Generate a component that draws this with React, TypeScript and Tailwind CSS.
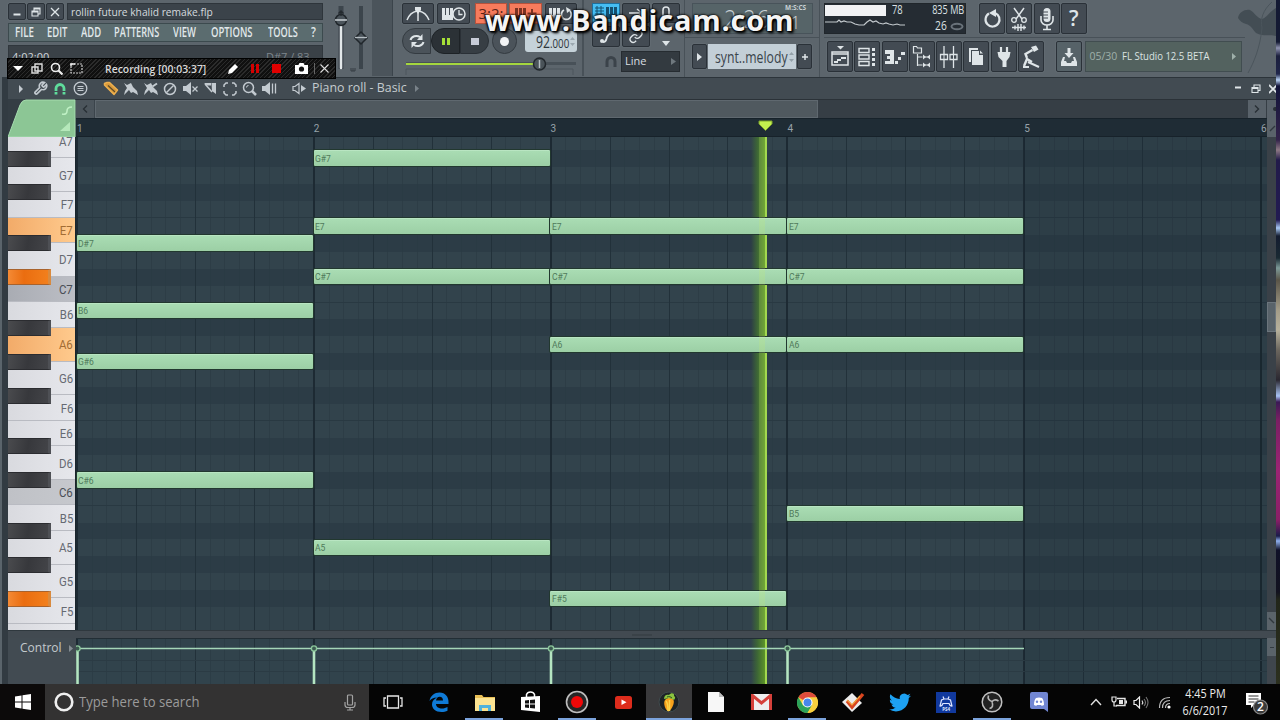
import React from "react";

const UI = "font-['Open_Sans','Noto_Sans',sans-serif]";
const ROW = 16.93;
const BAR = 236.8;

function Svg({ w, h, box, children, className = "" }: { w: number; h: number; box?: string; children: React.ReactNode; className?: string }) {
  return (
    <svg width={w} height={h} viewBox={box ?? `0 0 ${w} ${h}`} className={"block shrink-0 " + className} fill="none">
      {children}
    </svg>
  );
}

function Btn({ children, className = "" }: { children?: React.ReactNode; className?: string }) {
  return (
    <div className={"flex shrink-0 items-center justify-center rounded-[2px] border border-[#2a3138] bg-[#434b53] shadow-[0_0_0_1px_#616a71] " + className}>
      {children}
    </div>
  );
}

const L = "#dfe5e8";

/* ---------- top toolbar ---------- */

function TitleSection() {
  return (
    <div className="ml-2 flex w-[315px] shrink-0 flex-col gap-[3px] pt-[3px]">
      <div className="flex h-[17px] items-stretch gap-[1px]">
        <Btn className="w-[18px]"><Svg w={10} h={10}><path d="M1.500 7.500h7" stroke={L} strokeWidth="2" /></Svg></Btn>
        <Btn className="w-[18px]"><Svg w={10} h={10}><path d="M1 4h6v5H1zM3 4V1h6v6H7M1 5h6M3 2h6" stroke={L} strokeWidth="1.1" /></Svg></Btn>
        <Btn className="w-[18px]"><Svg w={10} h={10}><path d="M1 1l8 8M9 1l-8 8" stroke={L} strokeWidth="1.3" /></Svg></Btn>
        <div className="ml-[2px] flex flex-1 items-center border border-[#2e353b] bg-[#3b434a] pl-[3px]">
          <span className="origin-left scale-x-[0.93] whitespace-nowrap text-[11px] font-medium leading-none text-[#d5dade]">rollin future khalid remake.flp</span>
        </div>
      </div>
      <div className="flex h-[19px] items-center border border-[#3c4a4e] bg-[#5b6c6f] text-[13.5px] font-semibold leading-none text-[#e1e8ea]">
        <span className="ml-[6px] w-[32px]"><span className="inline-block origin-left scale-x-[0.72]">FILE</span></span>
        <span className="w-[34px]"><span className="inline-block origin-left scale-x-[0.7]">EDIT</span></span>
        <span className="w-[33px]"><span className="inline-block origin-left scale-x-[0.7]">ADD</span></span>
        <span className="w-[59px]"><span className="inline-block origin-left scale-x-[0.68]">PATTERNS</span></span>
        <span className="w-[38px]"><span className="inline-block origin-left scale-x-[0.7]">VIEW</span></span>
        <span className="w-[57px]"><span className="inline-block origin-left scale-x-[0.7]">OPTIONS</span></span>
        <span className="w-[43px]"><span className="inline-block origin-left scale-x-[0.68]">TOOLS</span></span>
        <span><span className="inline-block origin-left scale-x-[0.8]">?</span></span>
      </div>
      <div className="flex h-[31px] justify-between border border-[#30373d] bg-[#3a4147] px-[3px] pt-[5px] text-[11px] leading-none text-[#cfd5d9]">
        <span>4:02:00</span>
        <span className="mr-[1px] text-[#7e868c]">D#7 / 83 –</span>
      </div>
    </div>
  );
}

function MasterSliders() {
  return (
    <Svg w={68} h={76} className="ml-[3px]">
      <path d="M46 0h20v76H46z" fill="#4b545b" />
      <path d="M66.500 0v76" stroke="#3b444b" />
      <path d="M12.500 6h5v63h-5z" fill="#3c454c" />
      <path d="M15 22v46" stroke="#e3e8ea" strokeWidth="2.500" strokeLinecap="round" />
      <path d="M33 6h4v63h-4z" fill="#3c454c" />
      <circle cx="15" cy="20" r="5.500" fill="#4b545b" stroke="#20262b" strokeWidth="1.500" />
      <path d="M9 20h12" stroke="#dfe5e8" strokeWidth="1.300" />
      <path d="M15 11v5M12.500 13.500L15 11l2.500 2.500" stroke="#242a2f" strokeWidth="1.300" />
      <path d="M35 32l6 6-6 6-6-6z" fill="#4b545b" stroke="#20262b" strokeWidth="1.500" />
      <path d="M29 37.500h12" stroke="#b5bdc2" strokeWidth="1.300" />
      <path d="M25 68v3h4v-3M27 68v3" stroke="#343c42" />
    </Svg>
  );
}

function TransportSection() {
  return (
    <div className="relative flex w-[190px] shrink-0 flex-col bg-[#5c656c] pl-[8px] pt-[3px]">
      <div className="flex h-[21px] items-stretch gap-[3px]">
        <Btn className="w-[32px]">
          <Svg w={26} h={16}><path d="M2 14c2-5 5-8 10-9M24 14c-2-5-5-8-10-9M13 3v12" stroke={L} strokeWidth="1.500" /><path d="M10 1h6v3l-3 4-3-4z" fill={L} /></Svg>
        </Btn>
        <Btn className="w-[33px]">
          <Svg w={26} h={16}><path d="M1 2h3v7h1V2h3v7h1V2h3v12H1z" fill={L} /><circle cx="18" cy="8" r="6" fill="#434b53" stroke={L} strokeWidth="1.500" /><path d="M18 4v4.500h3.500" stroke={L} strokeWidth="1.300" /></Svg>
        </Btn>
        <div className="ml-[2px] flex w-[32px] items-center justify-center border border-[#b5523c] bg-[#f77b5c] text-[15px] leading-none text-[#5a2318]">3:2:</div>
        <div className="-ml-px flex w-[33px] items-center justify-center border border-[#b5523c] bg-[#f77b5c]">
          <Svg w={26} h={15}><path d="M2 2h3v7h1V2h3v7h1V2h3v12H2z" fill="#7c3322" /><path d="M19 3v9M14.500 7.500h9" stroke="#7c3322" strokeWidth="2" /></Svg>
        </div>
        <Btn className="w-[32px]">
          <Svg w={26} h={16}><path d="M1 2h3v7h1V2h3v7h1V2h3v12H1z" fill={L} /><path d="M16 4a5 5 0 1 0 6 1" stroke={L} strokeWidth="1.800" /><path d="M18 1l5 3-4 3z" fill={L} /></Svg>
        </Btn>
      </div>
      <div className="mt-[4px] flex h-[26px] items-stretch">
        <div className="flex w-[29px] items-center justify-center rounded-l-full border border-[#343b41] bg-[#4b535a]">
          <Svg w={18} h={16}><path d="M2.500 7A6 5 0 0 1 12 4M15.500 9A6 5 0 0 1 6 12" stroke={L} strokeWidth="2" /><path d="M14.500 1v6H9zM3.500 15V9H9z" fill={L} /></Svg>
        </div>
        <div className="flex w-[29px] items-center justify-center gap-[2px] rounded-l-full border border-[#1d2226] bg-[#2b3136]">
          <div className="h-[7px] w-[3px] bg-[#a5df38]" /><div className="h-[7px] w-[3px] bg-[#a5df38]" />
        </div>
        <div className="flex w-[29px] items-center justify-center rounded-r-full border border-[#2a3036] bg-[#373e44]">
          <div className="h-[7px] w-[8px] bg-[#c7ccd8]" />
        </div>
        <div className="ml-[3px] flex w-[25px] items-center justify-center rounded-full border border-[#343b41] bg-[#4b535a]">
          <div className="h-[9px] w-[9px] rounded-full bg-[#f2f4f5]" />
        </div>
        <div className="ml-[8px] mt-[3px] flex h-[21px] w-[52px] items-center rounded-[3px] bg-[#c5d2d9] pl-[11px] text-[#2e363c]">
          <span className="w-[34px]"><span className="flex w-fit origin-left scale-x-[0.72] items-baseline whitespace-nowrap text-[17px] leading-none">92<span className="text-[13.500px]">.000</span></span></span>
          <Svg w={5} h={11}><path d="M0 4l2.500-3L5 4M0 7l2.500 3L5 7" fill="#9ba8b0" /></Svg>
        </div>
      </div>
      <Svg w={176} h={20} className="ml-[2px] mt-[1px]">
        <path d="M2 8.500h170" stroke="#485158" strokeWidth="3" />
        <path d="M2 9h134" stroke="#a4d63e" strokeWidth="2" />
        <path d="M2 20v-6h167v6" stroke="#4d565d" />
        <circle cx="135.500" cy="9" r="6" fill="#4a5359" stroke="#20262b" strokeWidth="1.500" />
        <path d="M135.500 5v8" stroke="#b5bdc2" strokeWidth="1.500" />
      </Svg>
      <div className="absolute right-0 top-0 h-[76px] w-[2px] bg-[#485158]" />
    </div>
  );
}

function SnapSection() {
  return (
    <div className="flex w-[100px] shrink-0 flex-col bg-[#5c656c] pl-[8px] pt-[3px]">
      <div className="flex h-[20px] items-stretch gap-[2px]">
        <div className="flex w-[28px] items-center justify-center border border-[#1f6f9c] bg-[#45bdf2]">
          <Svg w={24} h={16}><path d="M1 3h9M1 6h9M1 9h9M3 1v10M7 1v10" stroke="#15506f" /><path d="M12 2h3v7h1V2h3v7h1V2h3v12H12z" fill="#15506f" /></Svg>
        </div>
        <Btn className="w-[28px]"><Svg w={18} h={12}><path d="M2 6h12M10 2l5 4-5 4" stroke={L} strokeWidth="1.500" /></Svg></Btn>
        <Btn className="w-[28px]"><Svg w={10} h={14}><rect x="2" y="1" width="6" height="12" rx="3" stroke={L} strokeWidth="1.500" /></Svg></Btn>
      </div>
      <div className="mt-[3px] flex h-[21px] items-stretch gap-[2px]">
        <Btn className="w-[28px]"><Svg w={16} h={14}><path d="M5 12c4 0 3-3 4-5s3-4 5-3" stroke={L} strokeWidth="1.800" /><circle cx="4" cy="11" r="2" fill={L} /></Svg></Btn>
        <Btn className="w-[28px]"><Svg w={16} h={15} box="0 0 24 24"><path d="M10 13a5 5 0 0 0 7.500.500l3-3a5 5 0 0 0-7-7l-1.700 1.700M14 11a5 5 0 0 0-7.500-.500l-3 3a5 5 0 0 0 7 7l1.700-1.700" stroke={L} strokeWidth="2.200" /></Svg></Btn>
        <div className="flex w-[28px] items-end justify-center pb-[1px]"><Svg w={8} h={5}><path d="M0 0h8L4 5z" fill={L} /></Svg></div>
      </div>
      <div className="mt-[4px] flex items-center">
        <Svg w={14} h={14} className="ml-[12px]"><path d="M3 12V6.500a4 4 0 0 1 8 0V12" stroke="#3b434a" strokeWidth="3" /></Svg>
        <div className="ml-[3px] flex h-[21px] w-[59px] items-center justify-between border border-[#262c31] bg-[#333a40] px-[3px] text-[11px] font-medium leading-none text-[#d9dfe2]">
          <span className="-mt-[2px]">Line</span>
          <Svg w={5} h={7}><path d="M0 0l5 3.500L0 7z" fill="#6f787e" /></Svg>
        </div>
      </div>
    </div>
  );
}

function PatternSection() {
  return (
    <div className="flex w-[135px] shrink-0 flex-col border-l border-[#485158] bg-[#5c656c] pl-[7px] pt-[3px]">
      <div className="flex h-[31px] w-[121px] border border-[#48535a] bg-[#566468] text-[#c9d1d5]">
        <div className="flex-1 pl-[31px] pt-px text-[26px] font-light leading-[26px] tracking-[1px]"><span className="inline-block origin-left scale-x-[0.84]">2:26</span></div>
        <div className="w-[27px] pt-[1px] text-[6.500px] font-bold leading-none">M:S:CS<div className="mt-px pl-[5px] text-[19px] font-light leading-[19px]">1</div></div>
      </div>
      <div className="-ml-[8px] mt-[3px] h-px bg-[#485158]" />
      <div className="mt-[6px] flex h-[25px] items-stretch gap-[1px]">
        <Btn className="w-[15px]"><Svg w={5} h={8}><path d="M0 0l5 4-5 4z" fill={L} /></Svg></Btn>
        <div className="flex w-[88px] items-center justify-between bg-[#c3cfd7] pl-[7px] pr-[2px] text-[#3a444b]">
          <span className="w-[73px]"><span className="block w-fit origin-left scale-x-[0.72] whitespace-nowrap text-[17px] leading-none">synt..melody</span></span>
          <Svg w={5} h={12}><path d="M0 4l2.500-3L5 4M0 8l2.500 3L5 8" fill="#94a1a9" /></Svg>
        </div>
        <Btn className="w-[15px]"><Svg w={8} h={8}><path d="M4 1v6M1 4h6" stroke={L} strokeWidth="1.500" /></Svg></Btn>
      </div>
    </div>
  );
}

const B26 = "h-[31px] w-[26px]";

function CpuPanel() {
  return (
    <div className="flex h-[31px] w-[142px] shrink-0 border border-[#20262b] bg-[#252c33] text-[12px] font-medium leading-none text-[#dce2e5]">
      <div className="flex w-[81px] flex-col">
        <div className="flex h-[12px] items-center">
          <div className="h-[11px] w-[62px] bg-[#f1f2f4]" />
          <span className="ml-[6px] inline-block origin-left scale-x-[0.78]">78</span>
        </div>
        <Svg w={81} h={16} className="mt-px">
          <path d="M0 5h12l2-2 2 2 3-1 3 1h4l4 2 4 1h5l3-3 3-2 3 2 3-1 3 2 4 1 3-1 3 1 4 1 4-1 3 1h5" stroke="#c3c9cd" strokeWidth="1.200" />
        </Svg>
      </div>
      <div className="flex flex-1 flex-col items-end gap-[4px] pr-[1px]">
        <span className="inline-block origin-right scale-x-[0.76]">835 MB</span>
        <div className="flex items-center gap-[3px]">
          <span className="inline-block origin-right scale-x-[0.85]">26</span>
          <Svg w={14} h={9}><ellipse cx="7" cy="4.500" rx="5.500" ry="2.800" stroke="#69727a" strokeWidth="2" /></Svg>
        </div>
      </div>
    </div>
  );
}

function RightSection() {
  return (
    <div className="relative flex min-w-0 flex-1 flex-col border-l border-[#485158] pl-[4px] pt-[3px]">
      <svg className="absolute right-0 top-0" width="40" height="76" viewBox="0 0 40 76" fill="none">
        <path d="M2 18c1-6 7-9 12-8 4 2 7 8 12 9 5-1 8-8 14-11v28c-5-2-12 1-20-3-3-3-5-8-10-9-4-1-6-3-8-6z" fill="#434d54" />
        <path d="M36 2c-9 8-12 17-10 26-2 20-8 34-14 45" stroke="#4b555c" />
      </svg>
      <div className="flex items-center">
        <CpuPanel />
        <div className="ml-[13px] flex gap-[1.300px]">
          <Btn className={B26}><Svg w={19} h={20}><path d="M6 4.500A7 7 0 1 0 12 4" stroke={L} strokeWidth="2.200" /><path d="M13 0v8L6 4z" fill={L} /></Svg></Btn>
          <Btn className={B26}><Svg w={18} h={26}><path d="M4 2l8 11M14 2L6 13" stroke={L} strokeWidth="1.500" /><circle cx="4" cy="14" r="2.300" stroke={L} strokeWidth="1.300" /><circle cx="14" cy="14" r="2.300" stroke={L} strokeWidth="1.300" /><path d="M2 21.500h14M5 19.500v4M8 18v7M11 18v7M14 19.500v4" stroke={L} strokeWidth="1.400" /></Svg></Btn>
          <Btn className={B26}><Svg w={16} h={24}><rect x="4.500" y="1" width="7" height="14" rx="3.500" fill={L} /><path d="M4 5h5M4 8h5M4 11h5" stroke="#434b53" /><path d="M2 9v4a6 5 0 0 0 12 0V9M8 18v4M4 22.500h8" stroke={L} strokeWidth="1.600" /></Svg></Btn>
          <Btn className={B26 + " text-[21px] font-semibold leading-none text-[#dfe5e8]"}>?</Btn>
        </div>
      </div>
      <div className="mt-[3px] h-px w-[421px] bg-[#485158]" />
      <div className="mt-[3px] flex gap-[1.300px] pl-[3px]">
        <Btn className={B26}><Svg w={20} h={22}><path d="M7 0h7l-3.500 3.500z" fill={L} /><path d="M2 6h16v13H2zM2 8h16" stroke={L} strokeWidth="1.500" /><path d="M4 16h4M7 14h4M11 12h5" stroke={L} strokeWidth="2" /></Svg></Btn>
        <Btn className={B26}><Svg w={18} h={20}><path d="M1 1.500h10v4H1zM1 8h10v4H1zM1 14.500h10v4H1z" stroke={L} strokeWidth="1.400" /><path d="M14 1h3v3h-3zM14 6h3v3h-3zM14 11h3v3h-3zM14 16h3v3h-3z" fill={L} /></Svg></Btn>
        <Btn className={B26}><Svg w={22} h={18}><path d="M1 2h9v14H1v-3h5v-2H3V8h3V6H1z" fill={L} /><path d="M11 13h3v3h-3zM14 9h3v3h-3zM17 4h4v3h-4z" fill={L} /></Svg></Btn>
        <Btn className={B26}><Svg w={20} h={24}><path d="M1.500 1.500h3l1 1.500h4v5h-8zM5.500 9v12M5.500 12h5M5.500 20h5M12 12h6M12 20h6" stroke={L} strokeWidth="1.200" /><path d="M11 9.500v5l3-2.500zM18 9.500v5L15 12zM11 17.500v5l3-2.500zM18 17.500v5L15 20z" fill={L} /></Svg></Btn>
        <Btn className={B26}><Svg w={20} h={24}><path d="M5 1v22M14.500 1v22" stroke={L} strokeWidth="1.300" /><path d="M1.500 9.500h7v5h-7zM11 9.500h7v5h-7z" fill="#434b53" stroke={L} strokeWidth="1.300" /><path d="M5 9v6M14.500 9v6" stroke={L} strokeWidth="1" /></Svg></Btn>
        <Btn className={B26}><Svg w={16} h={20}><path d="M2 15V2h8" stroke={L} strokeWidth="2" /><path d="M4 4h7v4h4v10H4z" fill={L} /><path d="M12 3.500l3 3h-3z" fill={L} /></Svg></Btn>
        <Btn className={B26}><Svg w={16} h={22}><path d="M5 1v6M11 1v6" stroke={L} strokeWidth="2.200" /><path d="M1.500 6h13l-1 5-3 4v6H6.500v-6l-4-4z" fill={L} /></Svg></Btn>
        <Btn className={B26}><Svg w={20} h={24}><path d="M2 22h6M7 17l11 5" stroke={L} strokeWidth="2" /><path d="M3 21l3-7 5 3M6 13L4.500 9l7-4" stroke={L} strokeWidth="2.400" /><path d="M10 2l5-1.500 2.500 4L13 7z" fill={L} /></Svg></Btn>
        <div className="ml-[11px] flex gap-[3px]">
          <Btn className={B26 + " bg-[#566268]"}><Svg w={18} h={20}><path d="M7.500 1h3v5h3L9 11 4.500 6h3z" fill={L} /><path d="M3 10l-2 5v4h16v-4l-2-5-2 0 1 4h-2l-1 2H7l-1-2H4l1-4z" fill={L} /></Svg></Btn>
          <div className="flex h-[31px] w-[157px] items-center border border-[#414d50] bg-[#53625f] pl-[3px] pr-[5px] text-[10.500px] font-medium leading-none">
            <span className="text-[#9fb0aa]">05/30</span>
            <span className="ml-[5px] flex-1 whitespace-nowrap text-[#dce4e2]"><span className="inline-block origin-left scale-x-[0.91]">FL Studio 12.5 BETA</span></span>
            <Svg w={4} h={7}><path d="M0 0l4 3.500L0 7z" fill="#9fb0aa" /></Svg>
          </div>
        </div>
      </div>
    </div>
  );
}

/* ---------- screen recorder overlay ---------- */

function RecorderBar() {
  return (
    <div className="absolute left-[7px] top-[58px] flex h-[21px] w-[329px] items-center border border-black bg-[repeating-linear-gradient(135deg,#101010_0px,#101010_2px,#2b2b2b_2px,#2b2b2b_3px)]">
      <Svg w={10} h={5} className="ml-[5px]"><path d="M0 0h10L5 5z" fill="#fff" /></Svg>
      <Svg w={12} h={12} className="ml-[8px]"><path d="M4 1h7v7H4zM1 4h6v6H1z" stroke="#ddd" strokeWidth="1.400" /></Svg>
      <Svg w={13} h={13} className="ml-[7px]"><circle cx="5.500" cy="5.500" r="4" stroke="#eee" strokeWidth="1.600" /><path d="M8.500 8.500l4 4" stroke="#eee" strokeWidth="2.200" /></Svg>
      <Svg w={13} h={11} className="ml-[7px]"><path d="M1 1h11v9H1z" stroke="#ccc" strokeWidth="1.200" strokeDasharray="2 1" /><path d="M1 3V1h4" stroke="#eee" strokeWidth="1.500" /></Svg>
      <span className="ml-[22px] w-[122px] whitespace-nowrap text-[11px] font-semibold leading-none text-[#d9d9d9]">
        <span className="inline-block origin-left scale-x-[0.945]">Recording [00:03:37]</span>
      </span>
      <Svg w={12} h={12}><path d="M1 11l1-4 6-6 3 3-6 6z" fill="#fff" /></Svg>
      <div className="ml-[12px] flex gap-[2px]"><div className="h-[9px] w-[3px] bg-[#d40000]" /><div className="h-[9px] w-[3px] bg-[#d40000]" /></div>
      <div className="ml-[13px] h-[9px] w-[9px] bg-[#e00000]" />
      <Svg w={13} h={11} className="ml-[14px]"><path d="M0 2h3.500l1-2h4l1 2H13v9H0z" fill="#fff" /><circle cx="6.500" cy="6" r="2.600" fill="#111" /></Svg>
      <div className="ml-[6px] h-[11px] w-px bg-[#666]" />
      <Svg w={9} h={9} className="ml-[5px]"><path d="M.500.500l8 8M8.500.500l-8 8" stroke="#ddd" strokeWidth="1.100" /></Svg>
    </div>
  );
}

/* ---------- piano roll ---------- */

function Cell({ children }: { children: React.ReactNode }) {
  return <div className="flex h-full w-[19.800px] shrink-0 items-center justify-center">{children}</div>;
}

function RollToolbar() {
  const c = "#c3cad0";
  return (
    <div className="flex h-[22px] shrink-0 items-center border-t border-[#2c343a] bg-[#424b52] pl-[3px]">
      <Cell><Svg w={4} h={8}><path d="M0 0l4 4-4 4z" fill={c} /></Svg></Cell>
      <Cell><Svg w={15} h={15} box="0 0 24 24"><path d="M14.700 6.300a1 1 0 0 0 0 1.400l1.600 1.600a1 1 0 0 0 1.400 0l3.800-3.800a6 6 0 0 1-7.900 7.900l-6.900 6.900a2.100 2.100 0 0 1-3-3l6.900-6.900a6 6 0 0 1 7.900-7.900z" stroke={c} strokeWidth="2.600" /></Svg></Cell>
      <Cell><Svg w={14} h={14}><path d="M3 12.500V6.500a4 4 0 0 1 8 0v6" stroke="#5fdc9c" strokeWidth="2.800" /><path d="M1 9.500h4M9 9.500h4" stroke="#424b52" /></Svg></Cell>
      <Cell><Svg w={15} h={15}><circle cx="7.500" cy="7.500" r="6.300" stroke={c} strokeWidth="1.300" /><path d="M4.500 5.500h6M4.500 7.500h6M4.500 9.500h6" stroke={c} strokeWidth="1.100" /></Svg></Cell>
      <div className="w-[11px]" />
      <Cell><Svg w={16} h={15}><path d="M1.500 4V2.500L4 1.500h2.500l8 7.500-3.500 4.500z" fill="#d99a3c" stroke="#eeb04e" strokeWidth="1.500" strokeLinejoin="round" /><path d="M5 4.500l7 6.500" stroke="#5d4a28" strokeWidth="1.200" /></Svg></Cell>
      <Cell><Svg w={15} h={14}><path d="M1 1l3 2 4-2 2 4 4 4 1 4-5-3-2 1-2-3-5 5 1-4 2-3z" fill={c} /></Svg></Cell>
      <Cell><Svg w={15} h={14}><path d="M1 1l3 2 4-2 2 4 4 4 1 4-5-3-2 1-2-3-5 5 1-4 2-3z" fill={c} /><path d="M9.500 4.500l4.500-3" stroke={c} strokeWidth="2" /></Svg></Cell>
      <Cell><Svg w={14} h={14}><circle cx="7" cy="7" r="5.500" stroke={c} strokeWidth="1.500" /><path d="M3.500 10.500l7-7" stroke={c} strokeWidth="1.500" /></Svg></Cell>
      <Cell><Svg w={15} h={13}><path d="M0 4h3l5-4v13L3 9H0z" fill={c} /><path d="M9.500 4.500l5 5M14.500 4.500l-5 5" stroke={c} strokeWidth="1.300" /></Svg></Cell>
      <Cell><Svg w={14} h={13}><path d="M1 1h7v2.500H4zM8.500 1H13v11l-4-3z" fill={c} /><path d="M2 2l7 8" stroke={c} strokeWidth="1.500" /></Svg></Cell>
      <Cell><Svg w={14} h={14}><path d="M1 5V3l2-2h2M9 1h2l2 2v2M13 9v2l-2 2H9M5 13H3l-2-2V9" stroke={c} strokeWidth="1.500" /></Svg></Cell>
      <Cell><Svg w={15} h={15}><circle cx="6.500" cy="6.500" r="5" stroke={c} strokeWidth="1.500" /><path d="M10 10l4 4" stroke={c} strokeWidth="2.500" /><path d="M4.500 6.500a2 2 0 0 1 2-2" stroke={c} /></Svg></Cell>
      <Cell><Svg w={15} h={13}><path d="M0 4h3l5-4v13L3 9H0z" fill={c} /><path d="M10.500 1.500v10M13.500 1.500v10" stroke={c} strokeWidth="1.300" /></Svg></Cell>
      <div className="w-[10px]" />
      <Cell><Svg w={14} h={13}><path d="M1 4.500h2l4-3v10l-4-3H1z" stroke={c} strokeWidth="1.200" /><path d="M9 3l5 3.500L9 10z" fill={c} /></Svg></Cell>
      <span className="-mt-[2px] ml-[3px] w-[103px] whitespace-nowrap text-[12px] font-medium leading-none text-[#c5cbcf]"><span className="inline-block origin-left scale-x-[1.03]">Piano roll - Basic</span></span>
      <Svg w={4} h={7}><path d="M0 0l4 3.500L0 7z" fill="#798289" /></Svg>
      <div className="flex-1" />
      <Svg w={8} h={10}><path d="M1 3.500h6" stroke={L} strokeWidth="2" /></Svg>
      <Svg w={10} h={10} className="ml-[9px]"><path d="M1 3.500h6v5H1zM3 3V1h6v5.500H7M1 4.500h6" stroke={L} strokeWidth="1.100" /></Svg>
      <Svg w={7} h={10} className="ml-[8px]"><path d="M0 1l8 8M8 1L0 9" stroke={L} strokeWidth="1.800" /></Svg>
    </div>
  );
}

type WhiteKey = { n: string; h: number; tone: string };
const PLAIN = "bg-[linear-gradient(90deg,#d9dadf,#e6e7ec)] text-[#666a72]";
const GRAY = "bg-[linear-gradient(90deg,#a9acb3,#bcbec5)] text-[#4a4e56]";
const HOT = "bg-[linear-gradient(90deg,#f2ab69,#ffca8d)] text-[#a26c34]";
const whites: WhiteKey[] = [
  { n: "A7", h: 33.9, tone: PLAIN }, { n: "G7", h: 33.8, tone: PLAIN }, { n: "F7", h: 25.4, tone: PLAIN },
  { n: "E7", h: 25.4, tone: HOT }, { n: "D7", h: 33.9, tone: PLAIN }, { n: "C7", h: 25.4, tone: GRAY },
  { n: "B6", h: 25.4, tone: PLAIN }, { n: "A6", h: 33.9, tone: HOT }, { n: "G6", h: 33.8, tone: PLAIN },
  { n: "F6", h: 25.4, tone: PLAIN }, { n: "E6", h: 25.4, tone: PLAIN }, { n: "D6", h: 33.9, tone: PLAIN },
  { n: "C6", h: 25.4, tone: "bg-[linear-gradient(90deg,#bfc1c6,#c6c8cd)] text-[#4a4e56]" }, { n: "B5", h: 25.4, tone: PLAIN }, { n: "A5", h: 33.9, tone: PLAIN },
  { n: "G5", h: 33.8, tone: PLAIN }, { n: "F5", h: 25.4, tone: PLAIN }, { n: "", h: 25.4, tone: PLAIN },
];
const blacks = [0, 2, 5, 7, 10, 12, 14, 17, 19, 22, 24, 26];
const litBlacks = [7, 26];
const rowTop = (i: number) => 13.2 + ROW * i;

function Keys() {
  return (
    <div className="relative h-full w-[68px] shrink-0 overflow-hidden border-r border-[#1a252c] bg-[#dcdde2]">
      <div className="-mt-[12.500px] flex flex-col">
        {whites.map((k, i) => (
          <div key={i} style={{ height: k.h }} className={"flex shrink-0 items-center justify-end border-b border-[#b9bbc2] pr-[2px] pt-[1px] text-[12px] leading-none " + k.tone}>
            <span className="inline-block origin-right scale-x-[0.88] font-['Roboto',sans-serif] text-[13px]">{k.n}</span>
          </div>
        ))}
      </div>
      {blacks.map((b) => (
        <div
          key={b}
          style={{ top: rowTop(b) + 0.3 }}
          className={
            "absolute left-0 h-[16px] w-[43px] border-y border-r-[3px] " +
            (litBlacks.includes(b)
              ? "border-[#a8622c] border-r-[#d98a3e] bg-[linear-gradient(90deg,#f48a35,#ea6d10_40%,#f27f1c)]"
              : "border-[#2b2c30] border-r-[#4e5055] bg-[linear-gradient(100deg,#4a4b4e,#37383c_50%,#434448)]")
          }
        />
      ))}
    </div>
  );
}

const notes: { bar: number; row: number; n: string }[] = [
  { bar: 0, row: 5, n: "D#7" }, { bar: 0, row: 9, n: "B6" }, { bar: 0, row: 12, n: "G#6" }, { bar: 0, row: 19, n: "C#6" },
  { bar: 1, row: 0, n: "G#7" }, { bar: 1, row: 4, n: "E7" }, { bar: 1, row: 7, n: "C#7" }, { bar: 1, row: 23, n: "A5" },
  { bar: 2, row: 4, n: "E7" }, { bar: 2, row: 7, n: "C#7" }, { bar: 2, row: 11, n: "A6" }, { bar: 2, row: 26, n: "F#5" },
  { bar: 3, row: 4, n: "E7" }, { bar: 3, row: 7, n: "C#7" }, { bar: 3, row: 11, n: "A6" }, { bar: 3, row: 21, n: "B5" },
];

function BarLines() {
  return (
    <div className="absolute inset-y-0 left-0 flex">
      {[0, 1, 2, 3, 4].map((b) => (
        <div key={b} className="flex h-full w-[236.800px] shrink-0 border-l-2 border-[#1d2a33]">
          {[0, 1, 2, 3].map((q) => (
            <div key={q} className={"flex h-full flex-1 " + (q ? "border-l border-[#22313a]" : "")}>
              {[0, 1, 2, 3].map((s) => (
                <div key={s} className={"h-full flex-1 " + (s ? "border-l border-[#2a3a43]/60" : "")} />
              ))}
            </div>
          ))}
        </div>
      ))}
      <div className="h-full w-[2px] bg-[#1b2830]" />
    </div>
  );
}

function Playhead() {
  return <div className="absolute inset-y-0 left-[675px] w-[16px] border-r-2 border-[#a3d850] bg-[linear-gradient(90deg,transparent,#3d6636_45%,#5c9428)]" />;
}

function Grid() {
  return (
    <div className="relative h-full min-w-0 flex-1 overflow-hidden bg-[#32434d]">
      <div className="-mt-[3.700px] flex flex-col">
        {Array.from({ length: 30 }, (_, k) => k - 1).map((i) => (
          <div
            key={i}
            className={"h-[16.930px] shrink-0 " + (blacks.includes(i) ? "bg-[#2c3c46]" : "bg-[#32434c]") + ([8, 20, 3, 15].includes(i) ? " border-b border-[#293942]" : "")}
          />
        ))}
      </div>
      <BarLines />
      <Playhead />
      {notes.map((n, k) => (
        <div
          key={k}
          style={{ left: 0.7 + n.bar * BAR, top: rowTop(n.row) + 0.2, width: BAR - 0.7 }}
          className="absolute flex h-[15.500px] items-center rounded-[1px] border-t border-t-[#b9e5c2] bg-[linear-gradient(#a9dcb3,#9ccfa5)] pl-[1.500px] shadow-[0_0_0_1px_#22382f]"
        >
          <span className="inline-block origin-left scale-x-90 font-['Roboto',sans-serif] text-[9.500px] leading-none text-[#4f7a5a]">{n.n}</span>
        </div>
      ))}
      <div className="absolute inset-y-0 left-[683px] w-[6px] bg-[#c8f070]/20" />
      <div className="absolute inset-y-0 right-0 w-[243px] bg-[#16242c]/15" />
    </div>
  );
}

function ScrollColumn() {
  return (
    <div className="flex h-full w-[9px] shrink-0 flex-col bg-[#3a4148]">
      <div className="h-[165px]" />
      <div className="h-[30px] border border-[#6b757c] bg-[#59636a]" />
      <div className="flex-1" />
      <div className="flex h-[18px] items-center justify-center bg-[#5a636a]"><Svg w={9} h={8}><path d="M2 1l5 5" stroke="#30383e" strokeWidth="1.300" /></Svg></div>
    </div>
  );
}

function ControlLane() {
  return (
    <div className="flex h-[46px] shrink-0 overflow-hidden">
      <div className="flex w-[68px] shrink-0 items-start bg-[#424b52] pl-[12px] pt-[4px] text-[12.500px] font-medium leading-none text-[#c3c9cd]">
        <span className="inline-block w-[49px]"><span className="inline-block origin-left scale-x-[0.96]">Control</span></span>
        <Svg w={4} h={7} className="mt-[3px]"><path d="M0 0l4 3.500L0 7z" fill="#858d93" /></Svg>
      </div>
      <div className="relative min-w-0 flex-1 overflow-hidden border-t border-[#222e35] bg-[#31434c]">
        <BarLines />
        <div className="absolute left-0 top-[21px] h-[12px] w-full border-y border-[#2b3b44]" />
        <Playhead />
        <svg className="absolute left-0 top-0" width="1191" height="46" viewBox="0 0 1191 46" fill="none">
          <path d="M1 9.500h947" stroke="#a5d6b8" strokeWidth="1.300" />
          {[1, 237.5, 474.5, 711].map((x) => (
            <g key={x}>
              <path d={`M${x + 0.5} 12V46`} stroke="#b4e5c1" strokeWidth="2.600" />
              <circle cx={x + 0.5} cy="9.500" r="2.600" fill="#3b5a50" stroke="#8cc79b" strokeWidth="1.300" />
            </g>
          ))}
        </svg>
        <div className="absolute inset-y-0 right-0 w-[243px] bg-[#16242c]/15" />
      </div>
      <div className="flex w-[9px] flex-col bg-[#3f464d]"><div className="flex h-[18px] items-center justify-center bg-[#5a636a]"><div className="h-px w-[4px] bg-[#333b41]" /></div></div>
    </div>
  );
}

function PianoRoll() {
  return (
    <div className="flex h-[607px] shrink-0 border-l-2 border-[#5a646b] bg-[#323b42] pl-[6px]">
      <div className="flex min-w-0 flex-1 flex-col overflow-hidden">
        <RollToolbar />
        <div className="flex h-[38px] shrink-0 bg-[#343d44]">
          <Svg w={68} h={38}>
            <path d="M0 38L12 6q2-5 6-5h49v37z" fill="#8cc695" stroke="#a5dcae" />
            <path d="M54 15q5 1 5-3t5-4" stroke="#bff0c4" strokeWidth="1.600" />
            <path d="M62 23v9h-10z" fill="#b5e8ba" />
          </Svg>
          <div className="flex min-w-0 flex-1 flex-col">
            <div className="flex h-[19px] border-t border-[#2b3238] bg-[#363e45]">
              <div className="flex w-[19px] items-center justify-center border-r border-[#3b444b] bg-[#4c555c]"><Svg w={6} h={8}><path d="M5 .500L1.500 4 5 7.500" stroke="#282f35" strokeWidth="1.300" /></Svg></div>
              <div className="w-[723px] border border-[#5f686f] bg-[#50595f]" />
              <div className="flex-1" />
              <div className="flex w-[18px] items-center justify-center bg-[#59626a]"><Svg w={6} h={8}><path d="M1 .500L4.500 4 1 7.500" stroke="#282f35" strokeWidth="1.400" /></Svg></div>
              <div className="ml-[1px] flex w-[9px] items-center justify-end bg-[#59626a]"><div className="h-[4px] w-[3px] rounded-l-full bg-[#282f35]" /></div>
            </div>
            <div className="flex h-[19px]">
              <div className="relative flex min-w-0 flex-1 items-center overflow-hidden border-y border-[#17222a] bg-[#1f2c35] font-['Roboto',sans-serif] text-[10px] leading-none text-[#98a3aa]">
                {[1, 2, 3, 4, 5, 6].map((n) => (
                  <div key={n} className="w-[236.800px] shrink-0 pl-[1px] pt-[2px]">{n}</div>
                ))}
                <svg className="absolute left-[682px] top-[1px]" width="15" height="11" viewBox="0 0 15 11"><path d="M1 1h13v3L7.500 10.500 1 4z" fill="#c3ef4e" stroke="#7da32c" /></svg>
              </div>
              <div className="flex w-[9px] items-center justify-end bg-[#5a636a]"><Svg w={7} h={8}><path d="M1 7l5-5" stroke="#30383e" strokeWidth="1.300" /></Svg></div>
            </div>
          </div>
        </div>
        <div className="flex h-[493px] shrink-0">
          <Keys />
          <Grid />
          <ScrollColumn />
        </div>
        <div className="flex h-[8px] shrink-0 items-center justify-center border-t border-[#2f383e] bg-[#424a51]"><div className="h-[2px] w-[20px] bg-[#3a4248]" /></div>
        <ControlLane />
      </div>
    </div>
  );
}

/* ---------- taskbar ---------- */

function Task({ children, run, active }: { children: React.ReactNode; run?: boolean; active?: boolean }) {
  return (
    <div className={"flex h-full w-[46.150px] shrink-0 flex-col items-center " + (active ? "bg-[#3a3a3c]" : "")}>
      <div className="flex flex-1 items-center justify-center pl-[1px] pt-[2px]">{children}</div>
      <div className={"h-[2px] " + (active ? "w-full bg-[#7ba3dc]" : run ? "w-[38px] bg-[#7ba3dc]" : "w-0")} />
    </div>
  );
}

function Taskbar() {
  return (
    <div className="flex h-[36px] items-center bg-[#050505] text-white">
      <div className="flex h-full w-[45px] items-center justify-center bg-[#0c0a0a]">
        <Svg w={16} h={16}><path d="M0 2.500L6.500 1.500V7.500H0zM7.500 1.300L16 0v7.500H7.500zM0 8.500h6.500v6L0 13.500zM7.500 8.500H16V16l-8.500-1.300z" fill="#fff" /></Svg>
      </div>
      <div className="flex h-full w-[324px] items-center bg-[#333232]">
        <Svg w={20} h={20} className="ml-[9px]"><circle cx="10" cy="10" r="8.300" stroke="#f0f0f0" strokeWidth="2.600" /></Svg>
        <span className="ml-[5px] flex-1 text-[14px] leading-none text-[#9b9b9b]"><span className="inline-block origin-left scale-x-[0.935]">Type here to search</span></span>
        <Svg w={12} h={17} className="mr-[13px]"><rect x="3.500" y="1" width="5" height="10" rx="1" stroke="#a3a3a3" strokeWidth="1.200" /><path d="M1 8v3q0 2.500 3 2.500h4q3 0 3-2.500V8M6 13.500v2.500M3 16h6" stroke="#a3a3a3" strokeWidth="1.200" /></Svg>
      </div>
      <Task><Svg w={20} h={14}><path d="M4.500 1h11v12h-11zM3 3H1v8h2M17 3h2v8h-2" stroke="#e6e6e6" strokeWidth="1.300" /></Svg></Task>
      <Task><Svg w={20} h={20}><path d="M0.500 9C1.500 3.500 5.500.500 10.500.500c6 0 9 4.500 9 9.500v2H7c0 3 3 4.500 6 4.500 2 0 4-.600 5.500-1.500v3.800C17 19.600 14.500 20 12.500 20 6.500 20 3 16.500 3 12.500 3 9 5 6.800 8 5.500 4.500 5.500 2 7 .500 9zM7 8.500h7c0-2.300-1.200-3.700-3.300-3.700C8.700 4.800 7.300 6.300 7 8.500z" fill="#0f7ad6" /></Svg></Task>
      <Task run><Svg w={22} h={19}><path d="M1 2h7l1.500 2H21v14H1z" fill="#e9bf55" /><path d="M1 5h20v13H1z" fill="#fbe392" /><path d="M5 18v-6h12v6h-3v-3H8v3z" fill="#4fb2dc" /></Svg></Task>
      <Task><Svg w={21} h={22}><path d="M6.500 6V3.500q1-2.500 4-2.500t4 2.500V6" stroke="#fff" strokeWidth="1.500" /><path d="M1 6l19-1v16L1 19z" fill="#fff" /><path d="M5 9.500l4-.500v3.500H5zM10 9l5-.500v4h-5zM5 13.500h4V17l-4-.500zM10 13.500h5v4l-5-.500z" fill="#111" /></Svg></Task>
      <Task run><Svg w={24} h={24}><circle cx="12" cy="12" r="10.500" fill="#262626" stroke="#bdbdbd" strokeWidth="1.600" /><circle cx="12" cy="12" r="6" fill="#f00808" /></Svg></Task>
      <Task><Svg w={17} h={13}><rect width="17" height="13" rx="2.500" fill="#dd2c1c" /><path d="M6.500 3.500v5.500l5-2.700z" fill="#fff" /></Svg></Task>
      <Task active><Svg w={22} h={22}><circle cx="11" cy="11" r="10" fill="#1d2325" stroke="#3f4a4d" /><path d="M7 9c3-3 7-2 8.500 0 1.500 3-2 10-5 11.500C7 19 5 12 7 9z" fill="#f7a21c" /><path d="M8 10c2 2 2 6 2 10M11.500 9v11" stroke="#fbd34a" strokeWidth="1.500" /><path d="M6 8c0-4 3-5 5-4 2-3 6-2 5 1 2 1 1 3 0 4-3-2-6-2-10-1z" fill="#8ac43f" /><path d="M9 6c2-1 4 0 5 1" stroke="#314d1e" /></Svg></Task>
      <Task><Svg w={16} h={20}><path d="M0 0h11l5 5v15H0z" fill="#f7f7f7" /><path d="M11 0v5h5z" fill="#bdbdbd" /></Svg></Task>
      <Task><Svg w={21} h={16}><path d="M0 0h21v16H0z" fill="#eee" /><path d="M1.500 16V1.500L10.500 9l9-7.500V16" stroke="#d5403a" strokeWidth="3" /></Svg></Task>
      <Task run>
        <Svg w={21} h={21} box="0 0 24 24"><circle cx="12" cy="12" r="12" fill="#f8cf3e" /><path d="M12 12L1.600 6A12 12 0 0 1 22.400 6z" fill="#de4b3c" /><path d="M1.600 6A12 12 0 0 0 12 24l5.200-9H6.800z" fill="#2ca35a" /><path d="M12 24a12 12 0 0 0 10.400-18H12l5.200 9z" fill="#f8cf3e" /><circle cx="12" cy="12" r="5.800" fill="#fff" /><circle cx="12" cy="12" r="4.500" fill="#4787ec" /></Svg>
      </Task>
      <Task><Svg w={23} h={21}><path d="M10 1l10 10-10 9L0 10z" fill="#ececec" /><path d="M5 9l5 6L21 2" stroke="#d9451f" strokeWidth="3.400" /><path d="M5 8l5 5 8-9" stroke="#f2a33c" strokeWidth="1.200" /></Svg></Task>
      <Task><Svg w={22} h={20} box="0 1 24 21"><path d="M23.950 4.570a10 10 0 0 1-2.820.770 4.960 4.960 0 0 0 2.160-2.720c-.950.550-2 .950-3.130 1.180a4.920 4.920 0 0 0-8.380 4.480C7.690 8.090 4.070 6.130 1.640 3.160a4.820 4.820 0 0 0-.670 2.480c0 1.710.870 3.210 2.190 4.100a4.900 4.900 0 0 1-2.230-.610v.060a4.920 4.920 0 0 0 3.950 4.820 5 5 0 0 1-2.210.090 4.940 4.940 0 0 0 4.600 3.420A9.870 9.870 0 0 1 0 19.540a14 14 0 0 0 7.550 2.210c9.050 0 14-7.500 14-13.980 0-.210 0-.420-.020-.630a9.940 9.940 0 0 0 2.420-2.570z" fill="#1da1f2" /></Svg></Task>
      <Task>
        <div className="flex h-[21px] w-[20px] flex-col items-center bg-[#11399e] pt-[3px]">
          <Svg w={14} h={12}><path d="M5 4h4l2.500 1L13 11q-2 .500-3-2.500H4Q3 11.500 1 11l1.500-6zM5 4l-1-2.500M9 4l1-2.500" stroke="#dfe6ff" strokeWidth="1.200" /></Svg>
          <span className="text-[4.500px] font-bold leading-none text-[#dfe6ff]">PS4</span>
        </div>
      </Task>
      <Task run><Svg w={22} h={22}><circle cx="11" cy="11" r="9.800" fill="#222" stroke="#bfbfbf" strokeWidth="1.500" /><path d="M7.500 4.500c-1 3 .5 5 3.500 6M17.500 10c-3-2-5.500-1-6.500 1M8.500 17.500c3-.5 4-3 2.500-6.500" stroke="#b5b5b5" strokeWidth="1.600" /></Svg></Task>
      <Task><Svg w={18} h={20}><path d="M2 0h14q2 0 2 2v18l-4-3H2q-2 0-2-2V2q0-2 2-2z" fill="#7186d2" /><path d="M4 13c0-4 1-6 2-7 2-.800 4-.800 6 0 1 1 2 3 2 7-1.500 1-3 1-3 0H7c0 1-1.500 1-3 0z" fill="#fff" /><circle cx="7" cy="9.800" r="1.200" fill="#7186d2" /><circle cx="11" cy="9.800" r="1.200" fill="#7186d2" /></Svg></Task>
      <div className="flex h-full flex-1 items-center">
        <Svg w={12} h={8} className="ml-[29px]"><path d="M1 7l5-5.500L11 7" stroke="#e0e0e0" strokeWidth="1.400" /></Svg>
        <Svg w={16} h={12} className="ml-[9px]"><path d="M6 2.500h8v7H5M15.500 4.500v3" stroke="#e6e6e6" strokeWidth="1.400" /><path d="M1 1v3q0 2 2 2t2-2V1zM3 6v4h3" stroke="#e6e6e6" strokeWidth="1.200" /><path d="M8 4h4v4H8z" fill="#e6e6e6" /></Svg>
        <Svg w={16} h={13} className="ml-[6px]"><path d="M1 4.500h2l3.500-3.500v11L3 8.500H1z" stroke="#eee" strokeWidth="1.200" /><path d="M9 4.500q1.500 2 0 4" stroke="#ddd" strokeWidth="1.200" /><path d="M11 3q3 3.500 0 7M13 1q4 5.500 0 11" stroke="#777" strokeWidth="1.100" /></Svg>
        <Svg w={13} h={13} className="ml-[9px]"><circle cx="11" cy="11" r="1.600" fill="#fff" /><path d="M7.500 12q0-4.500 4.500-4.500M4.500 12q0-7.500 7.500-7.500M1.500 12Q1.500 1.500 12 1.500" stroke="#bbb" strokeWidth="1.200" /></Svg>
        <div className="ml-[8px] flex w-[52px] flex-col items-center gap-[5px] whitespace-nowrap text-[12px] leading-[12px] text-[#ececec]">
          <span className="inline-block scale-x-[0.9]">4:45 PM</span>
          <span className="inline-block scale-x-[0.9]">6/6/2017</span>
        </div>
        <Svg w={24} h={24} className="ml-[14px] mt-[3px]"><path d="M1 1h15v12H9l-3 3v-3H1z" fill="#fff" /><path d="M3.500 4h10M3.500 7h10M3.500 10h6" stroke="#333" strokeWidth="1.200" /><circle cx="15.500" cy="15" r="7" fill="#3a3a3a" stroke="#8a8a8a" strokeWidth="1.200" /><text x="15.500" y="19.300" textAnchor="middle" fontSize="12" fontWeight="600" fill="#fff" fontFamily="Open Sans">2</text></Svg>
      </div>
    </div>
  );
}

export default function App() {
  return (
    <div className={"relative flex h-[720px] w-[1280px] flex-col overflow-hidden bg-black " + UI}>
      <div className="flex h-[684px]">
        <div className="flex w-[1276px] shrink-0 flex-col">
          <div className="flex h-[77px] shrink-0 overflow-hidden bg-[#5c656c]">
            <TitleSection />
            <MasterSliders />
            <TransportSection />
            <SnapSection />
            <PatternSection />
            <RightSection />
          </div>
          <PianoRoll />
        </div>
        <div className="flex-1 bg-[linear-gradient(#141a33_0px,#141a33_42px,#8f93b0_48px,#1b1f3d_56px,#20264a_74px,#b9d3f5_80px,#12143a_86px,#33244a_140px,#8d7884_150px,#221b4a_160px,#221b52_220px,#a8c8f5_228px,#141c30_236px,#1a2a33_258px,#7d9a98_268px,#5a5548_280px,#a39c88_310px,#b7b19c_330px,#6b665e_350px,#2a2730_380px,#a9c4f5_396px,#3a1a55_402px,#7a1f63_420px,#9c2473_470px,#8a1f66_520px,#1a1c4a_536px,#8fb0ee_541px,#101128_550px,#12121f_592px,#22261a_600px,#2c301f_684px)]" />
      </div>
      <Taskbar />
      <RecorderBar />
      <div className="absolute left-[485px] top-[2px] whitespace-nowrap text-[29px] font-bold leading-[36px] tracking-[0.800px] text-[#f4f4f4] [text-shadow:0_0_3px_#000,1px_1px_2px_#000,2px_2px_3px_#000,-1px_0_2px_#000]">www.Bandicam.com</div>
    </div>
  );
}
